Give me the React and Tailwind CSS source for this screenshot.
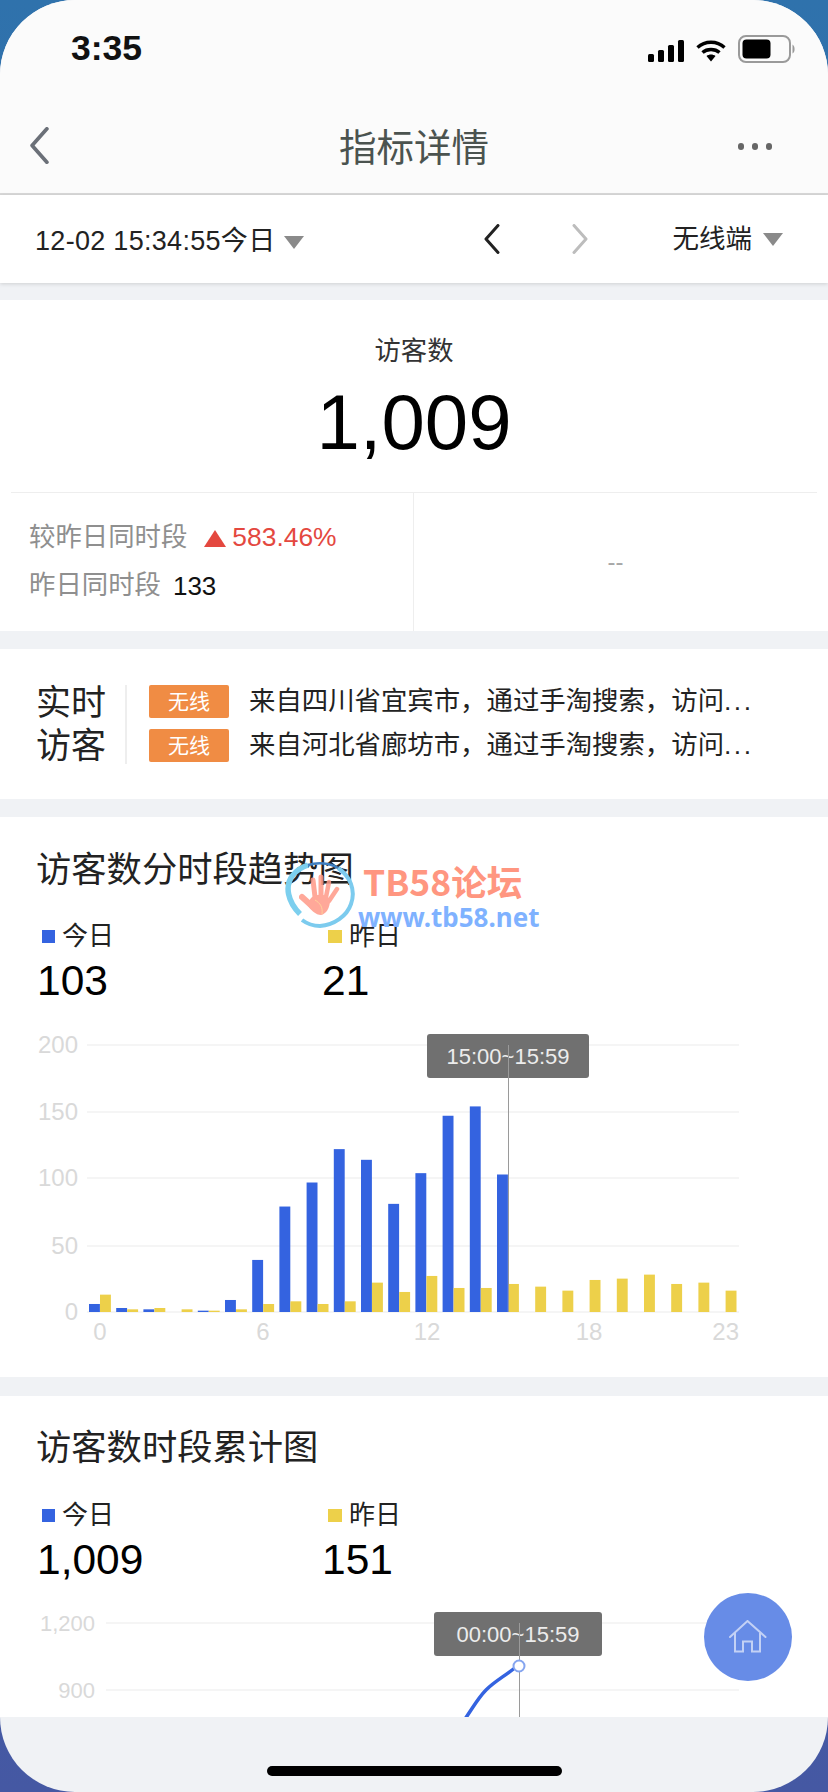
import React from "react";

const blue = [6, 3, 2, 0, 1, 9, 39, 79, 97, 122, 114, 81, 104, 147, 154, 103];
const yellow = [13, 2, 3, 2, 1, 2, 6, 8, 6, 8, 22, 15, 27, 18, 18, 21, 19, 16, 24, 25, 28, 21, 22, 16];

function Chevron({ dir = "left", color, className, w = 3 }) {
  return (
    <svg viewBox="0 0 16 30" className={className} fill="none">
      <path d={dir === "left" ? "M14 1.5 L2 15 L14 28.5" : "M2 1.5 L14 15 L2 28.5"} stroke={color} strokeWidth={w} strokeLinecap="round" strokeLinejoin="round" />
    </svg>
  );
}

function Tri({ className }) {
  return <div className={"w-0 h-0 border-l-[10px] border-r-[10px] border-t-[13px] border-l-transparent border-r-transparent border-t-[#8a8a8a] " + className} />;
}

function StatusIcons() {
  return (
    <div className="flex items-center">
      <svg width="36" height="22" viewBox="0 0 36 22" className="mt-[6px]">
        <rect x="0" y="14" width="6" height="8" rx="1.5" fill="#000" />
        <rect x="10" y="10" width="6" height="12" rx="1.5" fill="#000" />
        <rect x="20" y="5" width="6" height="17" rx="1.5" fill="#000" />
        <rect x="30" y="0" width="6" height="22" rx="1.5" fill="#000" />
      </svg>
      <svg width="30" height="22" viewBox="0 0 30 22" className="ml-[12px] mt-[6px]" fill="none">
        <path d="M1.5 7.5 C9 0.5 21 0.5 28.5 7.5" stroke="#000" strokeWidth="3.4" />
        <path d="M6.5 12.5 C11 8.5 19 8.5 23.5 12.5" stroke="#000" strokeWidth="3.4" />
        <path d="M10.5 16 L15 21.5 L19.5 16 C17 14 13 14 10.5 16 Z" fill="#000" />
      </svg>
      <svg width="59" height="28" viewBox="0 0 59 28" className="ml-[12px] mt-[1px]" fill="none">
        <rect x="1" y="1" width="51" height="26" rx="7" stroke="#9a9a9a" strokeWidth="2" />
        <rect x="4.5" y="4.5" width="28" height="19" rx="4" fill="#000" />
        <path d="M54.5 9.5 C57 10.5 57.5 17.5 54.5 18.5 Z" fill="#9a9a9a" />
      </svg>
    </div>
  );
}

function Grid({ ticks, x1, right, size }) {
  return ticks.map((t) => (
    <g key={t.label}>
      <line x1={x1} x2="739" y1={t.y} y2={t.y} stroke="#f5f5f5" strokeWidth="2" />
      <text x={right} y={t.y + 8} textAnchor="end" fontSize={size} fill="#d9d9d9">{t.label}</text>
    </g>
  ));
}

function Tooltip({ x, y, w, h, label, cx }) {
  return (
    <g>
      <rect x={x} y={y} width={w} height={h} rx="3" fill="#707070" />
      <text x={cx} y={y + h / 2 + 8} textAnchor="middle" fontSize="22" fill="#ececec">{label}</text>
    </g>
  );
}

function BarChart() {
  const y0 = 302;
  const k = 1.335;
  return (
    <svg width="828" height="367" viewBox="0 0 828 367" className="block">
      <Grid size={24} ticks={[{ label: "200", y: 35 }, { label: "150", y: 102 }, { label: "100", y: 168 }, { label: "50", y: 236 }, { label: "0", y: 302 }]} x1={87} right={78} />
      {blue.map((v, i) => <rect key={"b" + i} x={89 + i * 27.2} y={y0 - v * k} width="10.9" height={v * k} fill="#3463e0" />)}
      {yellow.map((v, i) => <rect key={"y" + i} x={100 + i * 27.2} y={y0 - v * k} width="10.9" height={v * k} fill="#edd04a" />)}
      {[["0", 100], ["6", 263], ["12", 427], ["18", 589]].map(([l, x]) => (
        <text key={l} x={x} y="330" textAnchor="middle" fontSize="24" fill="#d9d9d9">{l}</text>
      ))}
      <text x="739" y="330" textAnchor="end" fontSize="24" fill="#d9d9d9">23</text>
      <Tooltip x={427} y={24} w={162} h={44} cx={508} label="15:00~15:59" />
      <line x1="508.5" x2="508.5" y1="35" y2="302" stroke="#9a9a9a" strokeWidth="1" />
    </svg>
  );
}

function LineChart() {
  return (
    <svg width="828" height="136" viewBox="0 0 828 136" className="block">
      <Grid size={22} ticks={[{ label: "1,200", y: 42 }, { label: "900", y: 109 }]} x1={106} right={95} />
      <Tooltip x={434} y={31} w={168} h={44} cx={518} label="00:00~15:59" />
      <line x1="519.5" x2="519.5" y1="42" y2="136" stroke="#9a9a9a" strokeWidth="1" />
      <path d="M465 138 C472 128 478 117 486 109 C495 100 505 95 516 86" fill="none" stroke="#3463e0" strokeWidth="3.5" />
      <circle cx="519" cy="85" r="5.5" fill="#fff" stroke="#85a5ef" strokeWidth="2" />
    </svg>
  );
}

function Legend({ today, yest, legendClass, valueClass }) {
  return (
    <>
      <div className={"flex h-[30px] text-[26px] leading-[30px] text-[#222] " + legendClass}>
        <div className="w-[285px] flex items-center">
          <div className="ml-[5px] w-[13px] h-[13px] bg-[#3463e0]" />
          <span className="ml-[7px]">今日</span>
        </div>
        <div className="flex items-center">
          <div className="ml-[6px] w-[14px] h-[13px] bg-[#edd04a]" />
          <span className="ml-[7px]">昨日</span>
        </div>
      </div>
      <div className={"flex h-[44px] text-[42.5px] leading-[44px] text-black " + valueClass}>
        <div className="w-[285px]">{today}</div>
        <div>{yest}</div>
      </div>
    </>
  );
}

function VisitorRow({ text }) {
  return (
    <div className="flex items-center h-[33px]">
      <div className="w-[80px] h-[33px] rounded-[2px] bg-[#f08c44] text-white text-[21px] leading-[33px] text-center">无线</div>
      <div className="ml-[20px] text-[26.4px] leading-[33px] text-[#222] whitespace-nowrap">
        {text}
        <span className="tracking-[2.5px]">...</span>
      </div>
    </div>
  );
}

function Watermark() {
  return (
    <div className="absolute left-[284px] top-[860px] w-[260px] h-[72px] pointer-events-none">
      <svg width="74" height="70" viewBox="0 0 74 70" className="absolute left-0 top-0" fill="none">
        <path d="M16 54 C4 42 0 26 9 15 C13 10 18 7 24 5" stroke="#7ccfee" strokeWidth="5.5" />
        <path d="M24 5 C34 2 46 3 54 8" stroke="#3f7fc0" strokeWidth="2.5" />
        <path d="M54 8 C66 16 72 30 67 44 C63 56 50 65 36 66 C28 66 22 63 18 60" stroke="#7ccbee" strokeWidth="4" />
        <g opacity="0.85">
          <g stroke="#ff9a88" strokeLinecap="round">
            <path d="M18 37 L29 47" strokeWidth="6" />
            <path d="M29 20 L31 37" strokeWidth="5" />
            <path d="M37 17 L37 36" strokeWidth="5" />
            <path d="M45 22 L42 37" strokeWidth="4.500" />
            <path d="M53 29 L45 41" strokeWidth="4.500" />
          </g>
          <path d="M27 38 C32 33 44 34 46 40 C46 48 42 54 37 55 C32 55 26 50 23 44 Z" fill="#ff9a88" />
        </g>
        <path d="M31 40 C36 43 39 47 38 54" stroke="#ffd29a" strokeWidth="1" />
      </svg>
      <div className="absolute left-[79px] top-[1px] text-[35.5px] leading-[40px] font-bold text-[#ff9680] whitespace-nowrap font-['Noto_Sans_CJK_SC',sans-serif]">TB58论坛</div>
      <div className="absolute left-[74px] top-[42px] text-[26px] leading-[30px] font-bold text-[#7fb2ff] whitespace-nowrap font-['Noto_Sans',sans-serif]">www.tb58.net</div>
    </div>
  );
}

export default function App() {
  return (
    <div className="relative w-[828px] h-[1792px] overflow-hidden bg-linear-to-b from-[#2f72ac] to-[#4558a3] font-['Liberation_Sans','Noto_Sans_CJK_SC',sans-serif]">
      <div className="relative w-full h-full rounded-[75px] overflow-hidden bg-[#f0f2f5] flex flex-col">
        <header className="h-[195px] shrink-0 bg-[#fbfbfb] border-b-2 border-[#d9d9d9]">
          <div className="h-[96px] flex items-center justify-between pl-[71px] pr-[31px]">
            <div className="text-[35.5px] leading-[40px] font-bold text-[#111]">3:35</div>
            <StatusIcons />
          </div>
          <div className="relative h-[97px] flex items-center justify-center pt-[6px]">
            <Chevron className="absolute left-[29px] top-[31px] w-[21px] h-[37px]" color="#6b7078" />
            <div className="text-[37.5px] leading-[44px] text-[#4b534f]">指标详情</div>
            <div className="absolute left-[738px] top-[47px] flex gap-[8px]">
              <div className="w-[6px] h-[7px] rounded-full bg-[#666]" />
              <div className="w-[6px] h-[7px] rounded-full bg-[#666]" />
              <div className="w-[6px] h-[7px] rounded-full bg-[#666]" />
            </div>
          </div>
        </header>

        <div className="relative h-[88px] shrink-0 bg-white flex items-center pl-[35px] shadow-[0_1px_4px_rgba(0,0,0,0.14)]">
          <div className="w-[449px] flex items-center mt-[3px]">
            <span className="text-[27px] leading-[32px] text-[#222] whitespace-nowrap tracking-[0.3px]">12-02 15:34:55今日</span>
            <Tri className="ml-[9px] mt-[4px]" />
          </div>
          <Chevron className="w-[16px] h-[30px]" color="#222" />
          <Chevron dir="right" className="ml-[72px] w-[16px] h-[30px]" color="#bdbdbd" />
          <div className="ml-auto pr-[45px] flex items-center">
            <span className="text-[26.5px] leading-[32px] text-[#222]">无线端</span>
            <Tri className="ml-[11px]" />
          </div>
        </div>

        <section className="mt-[17px] h-[331px] shrink-0 bg-white">
          <div className="h-[192px] flex flex-col items-center pt-[36px]">
            <div className="text-[26.3px] leading-[30px] text-[#333]">访客数</div>
            <div className="mt-[18px] text-[78px] leading-[77px] text-black">1,009</div>
          </div>
          <div className="mx-[11px] h-[139px] border-t border-[#eeeeee] flex">
            <div className="w-[403px] border-r border-[#eeeeee] pl-[18px] pt-[21px]">
              <div className="h-[48px] flex items-center text-[26.4px]">
                <span className="text-[#8f8f8f]">较昨日同时段</span>
                <div className="ml-[17px] w-0 h-0 border-l-[11px] border-r-[11px] border-b-[17px] border-l-transparent border-r-transparent border-b-[#e4483f]" />
                <span className="ml-[6px] text-[#e4483f]">583.46%</span>
              </div>
              <div className="h-[48px] flex items-center text-[26.4px]">
                <span className="text-[#8f8f8f]">昨日同时段</span>
                <span className="ml-[12px] text-[26px] text-[#111]">133</span>
              </div>
            </div>
            <div className="flex-1 flex items-center justify-center text-[24px] text-[#a8a8a8]">--</div>
          </div>
        </section>

        <section className="mt-[18px] h-[150px] shrink-0 bg-white flex items-center pl-[36px]">
          <div className="w-[89px] text-[35px] leading-[43px] text-[#222]">
            <div>实时</div>
            <div>访客</div>
          </div>
          <div className="h-[79px] w-[2px] bg-[#eeeeee]" />
          <div className="ml-[22px] -mt-[1px] flex flex-col gap-[11px]">
            <VisitorRow text="来自四川省宜宾市，通过手淘搜索，访问" />
            <VisitorRow text="来自河北省廊坊市，通过手淘搜索，访问" />
          </div>
        </section>

        <section className="mt-[18px] h-[560px] shrink-0 bg-white">
          <div className="pl-[37px]">
            <div className="pt-[33px] -ml-[1px] text-[35.3px] leading-[40px] text-[#222] whitespace-nowrap">访客数分时段趋势图</div>
            <Legend today="103" yest="21" legendClass="mt-[31px]" valueClass="mt-[8px]" />
          </div>
          <div className="mt-[7px]">
            <BarChart />
          </div>
        </section>

        <section className="mt-[19px] h-[321px] shrink-0 bg-white overflow-hidden">
          <div className="pl-[37px]">
            <div className="pt-[32px] -ml-[1px] text-[35.3px] leading-[40px] text-[#222] whitespace-nowrap">访客数时段累计图</div>
            <Legend today="1,009" yest="151" legendClass="mt-[32px]" valueClass="mt-[8px]" />
          </div>
          <div className="-mt-[1px]">
            <LineChart />
          </div>
        </section>

        <div className="flex-1" />
        <div className="absolute left-[267px] top-[1766px] w-[295px] h-[10px] rounded-full bg-black" />
      </div>

      <Watermark />

      <div className="absolute left-[704px] top-[1593px] w-[88px] h-[88px] rounded-full bg-[#5f86e6]/95 flex items-center justify-center">
        <svg width="38" height="34" viewBox="0 0 38 34" fill="none">
          <path d="M1 17 L18.5 1 L36.500 17" stroke="#c3d1f5" strokeWidth="2" strokeLinejoin="round" strokeLinecap="round" />
          <path d="M6 13 V31.500 H14 V21.500 H23 V31.500 H31 V13" stroke="#c3d1f5" strokeWidth="2" />
        </svg>
      </div>
    </div>
  );
}
